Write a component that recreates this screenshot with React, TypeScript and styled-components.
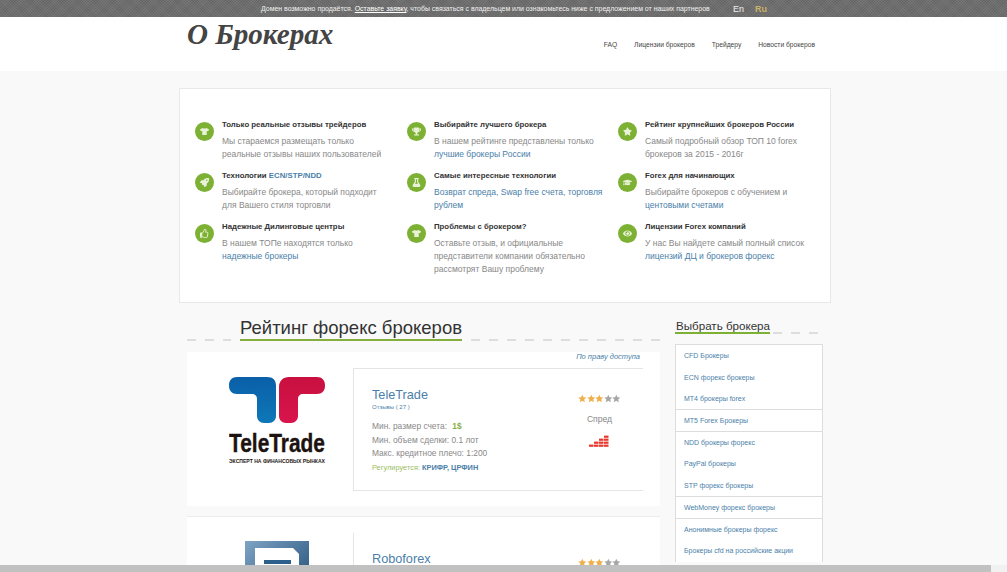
import React from "react"
import styled, { createGlobalStyle } from "styled-components"
import {
  FaTshirt,
  FaTrophy,
  FaStar,
  FaRocket,
  FaFlask,
  FaGraduationCap,
  FaRegThumbsUp,
  FaEye,
} from "react-icons/fa"

const GlobalStyle = createGlobalStyle`
  html, body {
    margin: 0;
    height: 100%;
    overflow: hidden;
    background: #f9f9f9;
    font-family: "Liberation Sans", Arial, sans-serif;
  }
  a { color: #4a80a9; text-decoration: none; }
`

const features = [
  {
    icon: <FaTshirt />,
    title: "Только реальные отзывы трейдеров",
    body: <>Мы стараемся размещать только<br />реальные отзывы наших пользователей</>,
  },
  {
    icon: <FaTrophy />,
    title: "Выбирайте лучшего брокера",
    body: <>В нашем рейтинге представлены только<br /><a href="#">лучшие брокеры России</a></>,
  },
  {
    icon: <FaStar />,
    title: "Рейтинг крупнейших брокеров России",
    body: <>Самый подробный обзор ТОП 10 forex<br />брокеров за 2015 - 2016г</>,
  },
  {
    icon: <FaRocket />,
    title: <>Технологии <a href="#">ECN/STP/NDD</a></>,
    body: <>Выбирайте брокера, который подходит<br />для Вашего стиля торговли</>,
  },
  {
    icon: <FaFlask />,
    title: "Самые интересные технологии",
    body: <><a href="#">Возврат спреда, Swap free счета, торговля<br />рублем</a></>,
  },
  {
    icon: <FaGraduationCap />,
    title: "Forex для начинающих",
    body: <>Выбирайте брокеров с обучением и<br /><a href="#">центовыми счетами</a></>,
  },
  {
    icon: <FaRegThumbsUp />,
    title: "Надежные Дилинговые центры",
    body: <>В нашем ТОПе находятся только<br /><a href="#">надежные брокеры</a></>,
  },
  {
    icon: <FaTshirt />,
    title: "Проблемы с брокером?",
    body: <>Оставьте отзыв, и официальные<br />представители компании обязательно<br />рассмотрят Вашу проблему</>,
  },
  {
    icon: <FaEye />,
    title: "Лицензии Forex компаний",
    body: <>У нас Вы найдете самый полный список<br /><a href="#">лицензий ДЦ и брокеров форекс</a></>,
  },
]

const sideLinks = [
  { label: "CFD Брокеры" },
  { label: "ECN форекс брокеры" },
  { label: "MT4 брокеры forex", divided: true },
  { label: "MT5 Forex Брокеры", divided: true },
  { label: "NDD брокеры форекс" },
  { label: "PayPal брокеры" },
  { label: "STP форекс брокеры", divided: true },
  { label: "WebMoney форекс брокеры", divided: true },
  { label: "Анонимные брокеры форекс" },
  { label: "Брокеры cfd на российские акции" },
]

const Stars: React.FC<{ filled: number }> = ({ filled }) => (
  <StarRow>
    {[0, 1, 2, 3, 4].map(i => (
      <svg key={i} width="8.6" height="9" viewBox="0 0 20 20">
        <path
          d="M10 1l2.8 5.9 6.4.8-4.7 4.4 1.2 6.4L10 15.4l-5.7 3.1 1.2-6.4L.8 7.7l6.400-.8z"
          fill={i < filled ? "#eeb04a" : "#a6a6a6"}
        />
      </svg>
    ))}
  </StarRow>
)

const SpreadBars = () => (
  <svg width="21" height="12" viewBox="0 0 21 12">
    {[
      [0, 1],
      [5, 2],
      [10, 3],
      [15, 4],
    ].map(([x, rows]) =>
      Array.from({ length: rows }).map((_, i) => (
        <rect key={`${x}-${i}`} x={x} y={9.6 - i * 3} width="4.500" height="2.200" fill="#e8382c" />
      ))
    )}
  </svg>
)

const TeleTradeLogo = () => (
  <svg width="97" height="90" viewBox="0 0 97 90">
    <defs>
      <linearGradient id="tb" x1="0" y1="0" x2="0" y2="1">
        <stop offset="0" stopColor="#0a5fa8" />
        <stop offset="1" stopColor="#0e78b8" />
      </linearGradient>
      <linearGradient id="tr" x1="0" y1="0" x2="0" y2="1">
        <stop offset="0" stopColor="#c8103f" />
        <stop offset="1" stopColor="#d8154d" />
      </linearGradient>
    </defs>
    <path
      d="M8 0h30c6 0 9 3 9 9v30c0 4-3 7-7 7h-5c-4 0-7-3-7-7V22c0-3-2-5-5-5H8c-5 0-8-3-8-8.500S3 0 8 0z"
      fill="url(#tb)"
    />
    <path
      d="M88 0H60c-6 0-10 4-10 10v29c0 4 3 7 7 7h5c4 0 7-3 7-7V22c0-3 2-5 5-5h14c5 0 8-3 8-8.500S93 0 88 0z"
      fill="url(#tr)"
    />
    <g transform="scale(0.8 1)">
      <text
        x="0"
        y="75"
        fontFamily="Liberation Sans"
        fontWeight="700"
        fontSize="26"
        textLength="120"
        lengthAdjust="spacingAndGlyphs"
        fill="#1c1311"
        stroke="#1c1311"
        strokeWidth="0.4"
      >
        TeleTrade
      </text>
    </g>
    <g transform="scale(0.8 1)">
      <text
        x="0"
        y="86"
        fontFamily="Liberation Sans"
        fontWeight="700"
        fontSize="5.500"
        textLength="120"
        lengthAdjust="spacingAndGlyphs"
        fill="#1c1311"
      >
        ЭКСПЕРТ НА ФИНАНСОВЫХ РЫНКАХ
      </text>
    </g>
  </svg>
)

const RoboLogo = () => (
  <svg width="64" height="64" viewBox="0 0 64 64">
    <defs>
      <linearGradient id="rb" x1="0" y1="0" x2="1" y2="1">
        <stop offset="0" stopColor="#7ea3c4" />
        <stop offset="1" stopColor="#17466f" />
      </linearGradient>
    </defs>
    <rect width="64" height="64" fill="url(#rb)" />
    <path d="M10 7h38l6 6v40H10z" fill="#fff" />
    <rect x="19" y="19" width="27" height="4" fill="#2d5f8c" />
  </svg>
)

const App: React.FC = () => {
  return (
    <>
      <GlobalStyle />
      <TopBar>
        <TopNotice>
          Домен возможно продаётся. <u>Оставьте заявку</u>, чтобы связаться с владельцем или
          ознакомьтесь ниже с предложением от наших партнеров
        </TopNotice>
        <Lang>En</Lang>
        <Lang active>Ru</Lang>
      </TopBar>

      <Header>
        <HeaderInner>
          <Logo>О Брокерах</Logo>
          <Menu>
            <MenuItem>FAQ</MenuItem>
            <MenuItem>Лицензии брокеров</MenuItem>
            <MenuItem>Трейдеру</MenuItem>
            <MenuItem>Новости брокеров</MenuItem>
          </Menu>
        </HeaderInner>
      </Header>

      <Wrapper>
        <FeaturePanel>
          {features.map((f, i) => (
            <Feature key={i}>
              <IconCircle>{f.icon}</IconCircle>
              <div>
                <FeatureTitle>{f.title}</FeatureTitle>
                <FeatureBody>{f.body}</FeatureBody>
              </div>
            </Feature>
          ))}
        </FeaturePanel>

        <Columns>
          <Main>
            <MainHeading>
              <LeadDashes />
              <MainTitle>Рейтинг форекс брокеров</MainTitle>
              <Dashes />
            </MainHeading>

            <Card>
              <CornerLink href="#">По праву доступа</CornerLink>
              <CardRow>
                <LogoCell>
                  <TeleTradeLogo />
                </LogoCell>
                <InfoBox>
                  <Info>
                    <BrokerName href="#">TeleTrade</BrokerName>
                    <Reviews href="#">Отзывы ( 27 )</Reviews>
                    <Fact>
                      Мин. размер счета: <Green>1$</Green>
                    </Fact>
                    <Fact>Мин. объем сделки: 0.1 лот</Fact>
                    <Fact>Макс. кредитное плечо: 1:200</Fact>
                    <Regulated>
                      Регулируется: <a href="#">КРИФР, ЦРФИН</a>
                    </Regulated>
                  </Info>
                  <Score>
                    <Stars filled={3} />
                    <ScoreLabel>Спред</ScoreLabel>
                    <SpreadBars />
                  </Score>
                </InfoBox>
              </CardRow>
            </Card>

            <Card second>
              <CardRow>
                <LogoCell>
                  <RoboLogo />
                </LogoCell>
                <InfoBox open>
                  <Info>
                    <BrokerName href="#">Roboforex</BrokerName>
                  </Info>
                  <Score>
                    <Stars filled={3} />
                  </Score>
                </InfoBox>
              </CardRow>
            </Card>
          </Main>

          <Side>
            <SideHeading>
              <SideTitle>Выбрать брокера</SideTitle>
              <Dashes />
            </SideHeading>
            <SideList>
              {sideLinks.map(l => (
                <SideRow key={l.label} divided={l.divided}>
                  <a href="#">{l.label}</a>
                </SideRow>
              ))}
            </SideList>
          </Side>
        </Columns>
      </Wrapper>

      <Scrollbar>
        <ScrollThumb />
      </Scrollbar>
    </>
  )
}

const TopBar = styled.div`
  display: flex;
  align-items: center;
  justify-content: flex-start;
  height: 17px;
  padding-left: 261px;
  color: #f1f1f1;
  font-size: 6.950px;
  background-color: #6e6e6e;
  background-image: repeating-linear-gradient(45deg, rgba(255, 255, 255, 0.05) 0 1px, transparent 1px 2px),
    repeating-linear-gradient(-45deg, rgba(0, 0, 0, 0.07) 0 1px, transparent 1px 2px);
`

const TopNotice = styled.span`
  width: 472px;
  white-space: nowrap;
  u { color: #fff; }
`

const Lang = styled.span<{ active?: boolean }>`
  width: 22px;
  font-size: 9px;
  font-weight: ${props => (props.active ? 700 : 400)};
  color: ${props => (props.active ? "#c9b26a" : "#eee")};
`

const Header = styled.header`
  height: 54px;
  background: #fff;
`

const HeaderInner = styled.div`
  display: flex;
  justify-content: space-between;
  width: 628px;
  margin-left: 187px;
`

const Logo = styled.div`
  font-family: "Liberation Serif", "Times New Roman", serif;
  font-size: 29.100px;
  font-weight: 700;
  font-style: italic;
  color: #444;
  line-height: 34px;
`

const Menu = styled.nav`
  display: flex;
  gap: 17px;
  padding-top: 23px;
`

const MenuItem = styled.span`
  font-size: 6.700px;
  color: #444;
  line-height: 10px;
`

const Wrapper = styled.div`
  width: 652px;
  margin: 17px 0 0 179px;
`

const FeaturePanel = styled.section`
  box-sizing: border-box;
  display: grid;
  grid-template-columns: 212px 211px 1fr;
  grid-auto-rows: 51px;
  height: 215px;
  padding: 30px 0 0 15px;
  background: #fff;
  border: 1px solid #e8e8e8;
`

const Feature = styled.div`
  display: flex;
  gap: 8px;
`

const IconCircle = styled.div`
  display: flex;
  flex: none;
  align-items: center;
  justify-content: center;
  width: 19px;
  height: 19px;
  margin-top: 3px;
  border-radius: 50%;
  background: #7db133;
  color: #e9f2d8;
  font-size: 9px;
`

const FeatureTitle = styled.div`
  font-size: 7.800px;
  font-weight: 700;
  color: #333;
  line-height: 12px;
  margin-bottom: 4px;
  white-space: nowrap;
`

const FeatureBody = styled.div`
  font-size: 8.500px;
  color: #888;
  line-height: 13px;
  white-space: nowrap;
`

const Columns = styled.div`
  display: flex;
  margin-top: 14px;
`

const Main = styled.main`
  width: 473px;
  margin-left: 8px;
`

const Dashes = styled.div`
  flex: 1;
  height: 2px;
  background-image: repeating-linear-gradient(90deg, #ddd 0 9px, transparent 9px 18px);
`

const LeadDashes = styled(Dashes)`
  flex: none;
  width: 44px;
`

const MainHeading = styled.div`
  display: flex;
  align-items: flex-end;
  gap: 9px;
  height: 24px;
`

const MainTitle = styled.h2`
  margin: 0;
  font-size: 18.500px;
  font-weight: 400;
  line-height: 22px;
  color: #333;
  border-bottom: 2px solid #86ae3f;
  white-space: nowrap;
`

const Card = styled.article<{ second?: boolean }>`
  position: relative;
  box-sizing: border-box;
  height: ${props => (props.second ? "60px" : "154px")};
  margin-top: ${props => (props.second ? "10px" : "11px")};
  padding-top: ${props => (props.second ? "15px" : "16px")};
  background: #fff;
  border-top: ${props => (props.second ? "1px solid #ececec" : "none")};
`

const CornerLink = styled.a`
  position: absolute;
  top: 1px;
  right: 20px;
  font-size: 7.500px;
  font-style: italic;
  line-height: 8px;
`

const CardRow = styled.div`
  display: flex;
`

const LogoCell = styled.div`
  display: flex;
  justify-content: center;
  box-sizing: border-box;
  flex: none;
  width: 166px;
  padding: 9px 0 0 14px;
`

const InfoBox = styled.div<{ open?: boolean }>`
  box-sizing: border-box;
  display: flex;
  justify-content: space-between;
  width: 290px;
  height: 123px;
  padding: 18px 22px 0 18px;
  border: 1px solid #e5e5e5;
  border-right: none;
  border-top-color: ${props => (props.open ? "transparent" : "#e5e5e5")};
`

const Info = styled.div`
  display: flex;
  flex-direction: column;
`

const BrokerName = styled.a`
  font-size: 12.700px;
  line-height: 16px;
`

const Reviews = styled.a`
  font-size: 6px;
  line-height: 8px;
  margin-bottom: 9px;
`

const Fact = styled.div`
  font-size: 8.400px;
  line-height: 13.500px;
  color: #888;
  white-space: nowrap;
`

const Green = styled.b`
  color: #86ae3f;
  margin-left: 3px;
`

const Regulated = styled.div`
  font-size: 7.400px;
  line-height: 13px;
  color: #9bbd63;
  white-space: nowrap;
  a { font-weight: 700; }
`

const Score = styled.div`
  display: flex;
  flex-direction: column;
  align-items: center;
  gap: 10px;
  padding-top: 7px;
`

const StarRow = styled.div`
  display: flex;
  line-height: 0;
`

const ScoreLabel = styled.div`
  font-size: 8.600px;
  line-height: 12px;
  color: #888;
`

const Side = styled.aside`
  width: 148px;
  margin-left: 15px;
`

const SideHeading = styled.div`
  display: flex;
  align-items: flex-end;
  gap: 3px;
  height: 17px;
`

const SideTitle = styled.h3`
  margin: 0;
  padding-left: 1px;
  font-size: 11.600px;
  font-weight: 400;
  line-height: 13px;
  color: #333;
  border-bottom: 2px solid #7db133;
  white-space: nowrap;
`

const SideList = styled.div`
  margin-top: 10px;
  background: #fff;
  border: 1px solid #ddd;
  border-bottom: none;
`

const SideRow = styled.div<{ divided?: boolean }>`
  box-sizing: border-box;
  height: 21.700px;
  padding-left: 8px;
  font-size: 7px;
  line-height: 21px;
  white-space: nowrap;
  border-bottom: ${props => (props.divided ? "1px solid #ddd" : "none")};
`

const Scrollbar = styled.div`
  position: fixed;
  left: 0;
  right: 0;
  bottom: 0;
  height: 7px;
  background: #f1f1f1;
`

const ScrollThumb = styled.div`
  width: 991px;
  height: 100%;
  background: #c1c1c1;
`

export default App
